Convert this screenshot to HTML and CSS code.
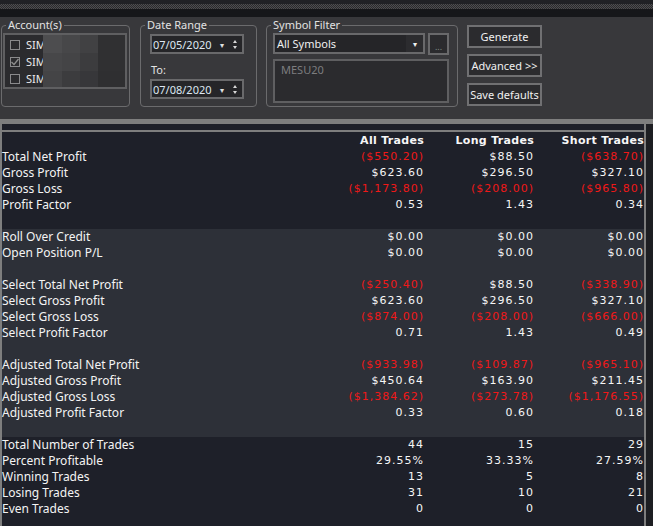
FILE: index.html
```html
<!DOCTYPE html>
<html lang="en">
<head>
    <meta charset="UTF-8">
    <title>Performance</title>
    <link rel="stylesheet" href="styles.css">
</head>
<body>
    <div class="topbar"><div class="grip"></div></div>

    <!-- report options -->
    <div class="panel">
        <fieldset class="group accounts">
            <legend>Account(s)</legend>
            <div class="listbox account-list">
                <div class="acc-rows">
                    <div class="acc"><span class="check"></span>SIM</div>
                    <div class="acc"><span class="check"><svg width="8" height="8" viewBox="0 0 8 8"><path d="M0.5 4 L3 6.5 L7.5 1" fill="none" stroke="#8e8e8e" stroke-width="1.3"/></svg></span>SIM</div>
                    <div class="acc"><span class="check"></span>SIM</div>
                </div>
                <div class="mosaic">
                    <span class="m1"></span><span class="m2"></span><span class="m3"></span><span class="m4"></span>
                    <span class="m2"></span><span class="m5"></span><span class="m6"></span><span class="m4"></span>
                    <span class="m5"></span><span class="m6"></span><span class="m7"></span><span class="m8"></span>
                </div>
            </div>
        </fieldset>

        <fieldset class="group dates">
            <legend>Date Range</legend>
            <div class="picker">
                <span class="picker-value">07/05/2020</span>
                <span class="drop">&#9662;</span>
                <span class="spin"><i class="up"></i><i class="down"></i></span>
            </div>
            <div class="to-label">To:</div>
            <div class="picker">
                <span class="picker-value">07/08/2020</span>
                <span class="drop">&#9662;</span>
                <span class="spin"><i class="up"></i><i class="down"></i></span>
            </div>
        </fieldset>

        <fieldset class="group symbols">
            <legend>Symbol Filter</legend>
            <div class="combo-row">
                <div class="combo">
                    <span class="combo-value">All Symbols</span>
                    <span class="combo-arrow">&#9662;</span>
                </div>
                <div class="ellipsis">...</div>
            </div>
            <div class="listbox symbol-list">MESU20</div>
        </fieldset>

        <div class="actions">
            <button class="btn">Generate</button>
            <button class="btn">Advanced &gt;&gt;</button>
            <button class="btn">Save defaults</button>
        </div>
    </div>

    <!-- summary grid -->
    <div class="report">
        <div class="frame">
            <div class="frame-head"></div>
            <table class="stats">
                <colgroup>
                    <col class="col-label">
                    <col class="col-num">
                    <col class="col-num">
                    <col class="col-num">
                </colgroup>
                <thead>
                    <tr><th></th><th>All Trades</th><th>Long Trades</th><th>Short Trades</th></tr>
                </thead>
                <tbody class="dark">
                    <tr><td>Total Net Profit</td><td class="neg">($550.20)</td><td>$88.50</td><td class="neg">($638.70)</td></tr>
                    <tr><td>Gross Profit</td><td>$623.60</td><td>$296.50</td><td>$327.10</td></tr>
                    <tr><td>Gross Loss</td><td class="neg">($1,173.80)</td><td class="neg">($208.00)</td><td class="neg">($965.80)</td></tr>
                    <tr><td>Profit Factor</td><td>0.53</td><td>1.43</td><td>0.34</td></tr>
                    <tr><td></td><td></td><td></td><td></td></tr>
                </tbody>
                <tbody class="light">
                    <tr><td>Roll Over Credit</td><td>$0.00</td><td>$0.00</td><td>$0.00</td></tr>
                    <tr><td>Open Position P/L</td><td>$0.00</td><td>$0.00</td><td>$0.00</td></tr>
                    <tr><td></td><td></td><td></td><td></td></tr>
                    <tr><td>Select Total Net Profit</td><td class="neg">($250.40)</td><td>$88.50</td><td class="neg">($338.90)</td></tr>
                    <tr><td>Select Gross Profit</td><td>$623.60</td><td>$296.50</td><td>$327.10</td></tr>
                    <tr><td>Select Gross Loss</td><td class="neg">($874.00)</td><td class="neg">($208.00)</td><td class="neg">($666.00)</td></tr>
                    <tr><td>Select Profit Factor</td><td>0.71</td><td>1.43</td><td>0.49</td></tr>
                    <tr><td></td><td></td><td></td><td></td></tr>
                    <tr><td>Adjusted Total Net Profit</td><td class="neg">($933.98)</td><td class="neg">($109.87)</td><td class="neg">($965.10)</td></tr>
                    <tr><td>Adjusted Gross Profit</td><td>$450.64</td><td>$163.90</td><td>$211.45</td></tr>
                    <tr><td>Adjusted Gross Loss</td><td class="neg">($1,384.62)</td><td class="neg">($273.78)</td><td class="neg">($1,176.55)</td></tr>
                    <tr><td>Adjusted Profit Factor</td><td>0.33</td><td>0.60</td><td>0.18</td></tr>
                    <tr><td></td><td></td><td></td><td></td></tr>
                </tbody>
                <tbody class="dark">
                    <tr><td>Total Number of Trades</td><td>44</td><td>15</td><td>29</td></tr>
                    <tr><td>Percent Profitable</td><td>29.55%</td><td>33.33%</td><td>27.59%</td></tr>
                    <tr><td>Winning Trades</td><td>13</td><td>5</td><td>8</td></tr>
                    <tr><td>Losing Trades</td><td>31</td><td>10</td><td>21</td></tr>
                    <tr><td>Even Trades</td><td>0</td><td>0</td><td>0</td></tr>
                </tbody>
            </table>
        </div>
    </div>
</body>
</html>
```

FILE: styles.css
```css
html, body {
    margin: 0;
    height: 100%;
}

body {
    background: #1d1e22;
    font-family: 'Noto Sans', sans-serif;
    font-size: 11px;
    color: #e6e6e6;
    overflow: hidden;
}

/* window strip with the dotted grip */
.topbar {
    height: 17px;
    padding-top: 4px;
    box-sizing: border-box;
    background: linear-gradient(#202125 0 4px, #16171a 4px);
}

.grip {
    height: 5px;
    background-color: #2b2b2d;
    background-image: conic-gradient(#4d4d50 25%, #2a2a2c 0 50%, #4d4d50 0 75%, #2a2a2c 0);
    background-size: 2px 2px;
}

/* options panel */
.panel {
    height: 102px;
    background: #38383b;
    display: flex;
    align-items: flex-start;
    padding: 1px 0 0 1px;
    box-sizing: border-box;
}

.group {
    margin: 0;
    height: 89px;
    box-sizing: border-box;
    border: 1px solid #6b6b6d;
    border-radius: 4px;
    padding: 1px 0 0 0;
}

.group legend {
    padding: 0 2px;
    margin-left: 4px;
    line-height: 14px;
    color: #e2e2e2;
}

.accounts {
    width: 129px;
}

.dates {
    width: 117px;
    margin-left: 10px;
    padding-top: 2px;
}

.symbols {
    width: 192px;
    margin-left: 9px;
}

.listbox {
    background: #2b2b2e;
    border: 2px solid #5f5f61;
    box-sizing: border-box;
}

.account-list {
    width: 124px;
    height: 56px;
    margin-left: 1px;
    display: flex;
}

.acc-rows {
    width: 38px;
    flex: none;
    padding-top: 1px;
}

.acc {
    height: 17px;
    display: flex;
    align-items: center;
    padding-left: 5px;
    color: #ececec;
}

.check {
    flex: none;
    width: 10px;
    height: 10px;
    box-sizing: border-box;
    border: 1px solid #8a8a8c;
    margin-right: 6px;
    display: flex;
    align-items: center;
    justify-content: center;
}

/* blurred account names */
.mosaic {
    flex: 1;
    display: grid;
    grid-template-columns: 19px 18px 18px 1fr;
    grid-template-rows: 18px 18px 1fr;
}

.m1 { background: #4d4d4f; }
.m2 { background: #474749; }
.m3 { background: #414143; }
.m4 { background: #303032; }
.m5 { background: #444446; }
.m6 { background: #3c3c3e; }
.m7 { background: #37373a; }
.m8 { background: #2f2f31; }

/* date pickers */
.picker {
    width: 94px;
    height: 20px;
    margin-left: 9px;
    box-sizing: border-box;
    border: 2px solid #69696b;
    background: #252528;
    display: flex;
    align-items: center;
    padding-left: 1px;
    color: #dde7f2;
}

.picker-value {
    flex: 1;
}

.drop {
    font-size: 8px;
    color: #e0e0e0;
    margin-right: 9px;
}

.spin {
    display: flex;
    flex-direction: column;
    gap: 3px;
    margin-right: 5px;
}

.spin i {
    width: 0;
    height: 0;
    border-left: 2.5px solid transparent;
    border-right: 2.5px solid transparent;
}

.spin .up {
    border-bottom: 3px solid #d8d8d8;
}

.spin .down {
    border-top: 3px solid #d8d8d8;
}

.to-label {
    line-height: 14px;
    margin: 9px 0 2px 10px;
    color: #e2e2e2;
}

/* symbol filter */
.combo-row {
    display: flex;
    gap: 3px;
    align-items: flex-start;
    margin-left: 6px;
}

.combo {
    width: 152px;
    height: 21px;
    box-sizing: border-box;
    border: 2px solid #69696b;
    background: #252528;
    display: flex;
    align-items: center;
    padding-left: 2px;
    color: #f0f0f0;
}

.combo-value {
    flex: 1;
}

.combo-arrow {
    font-size: 8px;
    width: 17px;
    height: 100%;
    display: flex;
    align-items: center;
    justify-content: center;
    background: #2c2c2f;
}

.ellipsis {
    width: 21px;
    height: 22px;
    box-sizing: border-box;
    border: 2px solid #69696b;
    background: #2b2b2e;
    color: #7f8a86;
    font-size: 9px;
    text-align: center;
    line-height: 24px;
}

.symbol-list {
    width: 176px;
    height: 44px;
    margin: 4px 0 0 6px;
    padding: 1px 0 0 6px;
    color: #7d7d7f;
}

/* buttons */
.actions {
    margin: 7px 0 0 9px;
    display: flex;
    flex-direction: column;
    gap: 6px;
}

.btn {
    width: 75px;
    height: 23px;
    padding: 0;
    font-family: 'Noto Sans', sans-serif;
    font-size: 11px;
    color: #f0f0f0;
    background: #2b2b2e;
    border: 2px solid #707072;
}

/* summary grid */
.report {
    border-top: 5px solid #7e7e7e;
    height: calc(100% - 119px);
    box-sizing: border-box;
}

.frame {
    width: 646px;
    height: 100%;
    box-sizing: border-box;
    border-left: 2px solid #7e7e7e;
    border-right: 2px solid #7e7e7e;
    background: #1e2029;
}

.frame-head {
    height: 6px;
    border-bottom: 2px solid #7e7e7e;
    margin-bottom: 1px;
}

.stats {
    width: 641px;
    border-collapse: collapse;
    table-layout: fixed;
}

.col-label { width: 312px; }
.col-num { width: 110px; }

.stats th,
.stats td {
    height: 16px;
    padding: 0;
    line-height: 16px;
    white-space: nowrap;
}

.stats td:first-child {
    font-family: 'Noto Sans', sans-serif;
    font-size: 12px;
    color: #f4f4f4;
}

.stats td + td,
.stats th {
    text-align: right;
    font-family: 'DejaVu Sans', sans-serif;
    font-size: 11px;
    letter-spacing: 1px;
    color: #f6f6f6;
}

.stats th {
    font-weight: bold;
    letter-spacing: 0.3px;
}

.stats td.neg {
    color: #f01818;
}

.dark { background: #1e2029; }
.light { background: #2d3038; }
```
